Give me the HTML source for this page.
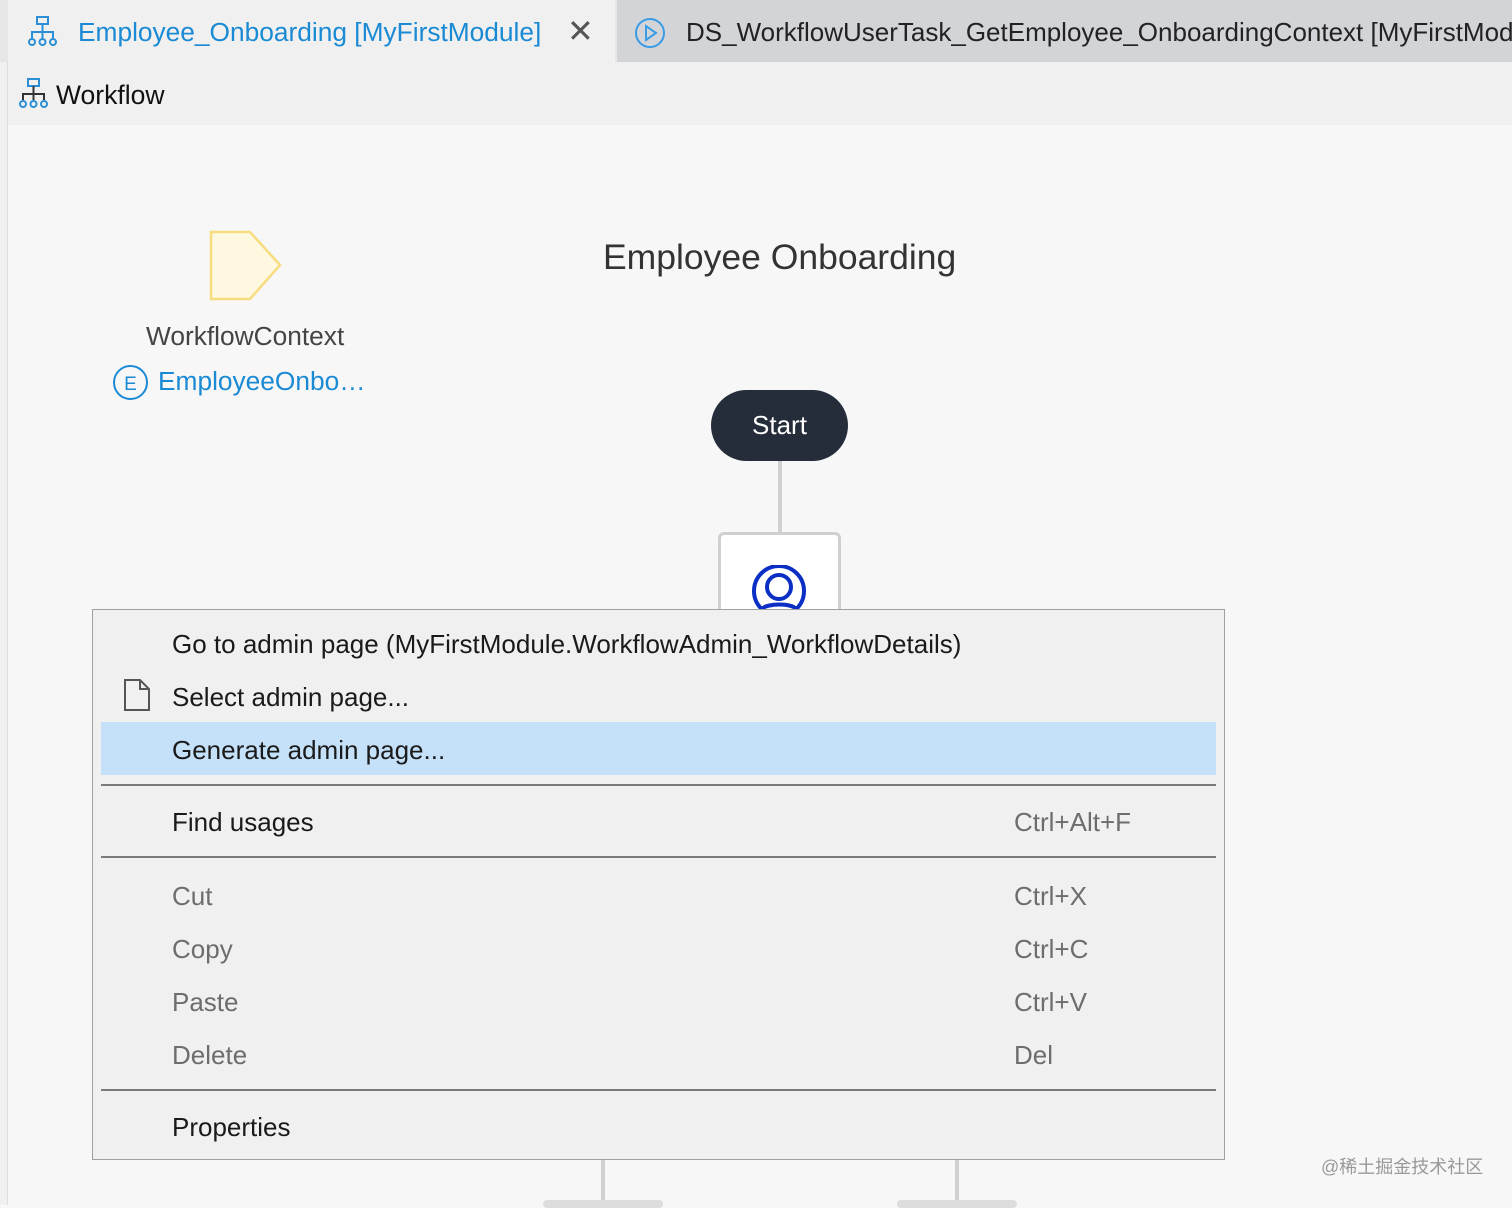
<!DOCTYPE html>
<html><head><meta charset="utf-8"><style>
body{margin:0;width:1512px;height:1205px;overflow:hidden;background:#f7f7f7;font-family:"Liberation Sans","Noto Sans CJK SC",sans-serif;position:relative}
.abs{position:absolute}
.tabbar{left:0;top:0;width:1512px;height:62px;background:#e6e6e6}
.tab1{left:8px;top:0;width:607px;height:62px;background:#f0f0f0}
.tab2{left:617px;top:0;width:895px;height:62px;background:#d3d4d7}
.tool{left:8px;top:62px;width:1504px;height:63px;background:#f0f0f0}
.t{white-space:nowrap}
.menu{left:92px;top:609px;width:1131px;height:549px;background:#f0f0f0;border:1px solid #a0a0a0}
.mi{position:absolute;left:79px;font-size:26px;color:#1a1a1a;white-space:nowrap;line-height:30px}
.sc{position:absolute;left:921px;font-size:26px;color:#6d6d6d;line-height:30px}
.dis{color:#6d6d6d}
.sep{position:absolute;left:8px;width:1115px;height:2px;background:#7a7a7a}
</style></head><body>
<div class="abs tabbar"></div>
<div class="abs tab1"></div>
<div class="abs tab2"></div>
<div class="abs tool"></div>
<div class="abs" style="left:0;top:62px;width:7px;height:1143px;background:#f0f0f0;border-right:1px solid #ddd"></div>

<svg class="abs" style="left:28px;top:16px" width="30" height="32" viewBox="0 0 30 32" fill="none" stroke="#2b8fd6" stroke-width="2"><rect x="9" y="1" width="11" height="7"/><path d="M14.5 8v8M4 22v-6h21v6M14.5 16v6"/><circle cx="4" cy="26" r="3"/><circle cx="14.5" cy="26" r="3"/><circle cx="25" cy="26" r="3"/></svg>
<div class="abs t" style="left:78px;top:17px;font-size:26.3px;color:#1a8ad4">Employee_Onboarding [MyFirstModule]</div>
<div class="abs" style="left:567px;top:12px;font-size:32px;color:#555">✕</div>
<svg class="abs" style="left:634px;top:17px" width="32" height="32" viewBox="0 0 32 32" fill="none" stroke="#3a9be6" stroke-width="2"><circle cx="16" cy="16" r="14"/><path d="M12 9v14l10-7z"/></svg>
<div class="abs t" style="left:686px;top:17px;font-size:26px;color:#222">DS_WorkflowUserTask_GetEmployee_OnboardingContext [MyFirstModule]</div>

<svg class="abs" style="left:19px;top:78px" width="30" height="32" viewBox="0 0 30 32" fill="none" stroke="#2b8fd6" stroke-width="2"><rect x="9" y="1" width="11" height="7"/><path d="M14.5 8v8M4 22v-6h21v6M14.5 16v6" stroke="#333"/><circle cx="4" cy="26" r="3"/><circle cx="14.5" cy="26" r="3"/><circle cx="25" cy="26" r="3"/></svg>
<div class="abs t" style="left:56px;top:80px;font-size:26.5px;color:#111">Workflow</div>

<svg class="abs" style="left:208px;top:229px" width="76" height="74"><path d="M3 3H42L72 36L42 70H3Z" fill="#fff8e0" stroke="#f8dc80" stroke-width="2.5"/></svg>
<div class="abs t" style="left:146px;top:321px;font-size:26.3px;color:#444">WorkflowContext</div>
<svg class="abs" style="left:112px;top:364px" width="37" height="37"><circle cx="18.5" cy="18.5" r="16.5" fill="none" stroke="#1a8ad4" stroke-width="2"/><text x="18.5" y="26" text-anchor="middle" font-size="19" fill="#1a8ad4" font-family="Liberation Sans">E</text></svg>
<div class="abs t" style="left:158px;top:366px;font-size:26.3px;color:#1a8ad4">EmployeeOnbo…</div>

<div class="abs t" style="left:603px;top:237px;font-size:35.5px;color:#333">Employee Onboarding</div>
<div class="abs" style="left:711px;top:390px;width:137px;height:71px;border-radius:36px;background:#252d3a;color:#fff;font-size:26px;text-align:center;line-height:71px">Start</div>
<div class="abs" style="left:778px;top:461px;width:4px;height:72px;background:#d0d0d0"></div>
<div class="abs" style="left:718px;top:532px;width:117px;height:90px;background:#fff;border:3px solid #d0d0d0;border-radius:6px"></div>
<svg class="abs" style="left:750px;top:565px" width="60" height="44"><circle cx="29" cy="26" r="25" fill="none" stroke="#0b2fc4" stroke-width="4"/><circle cx="29" cy="22" r="12" fill="none" stroke="#0b2fc4" stroke-width="4"/><path d="M12 44c5-6 30-6 34 0" fill="none" stroke="#0b2fc4" stroke-width="4"/></svg>

<div class="abs" style="left:601px;top:1158px;width:4px;height:47px;background:#d0d0d0"></div>
<div class="abs" style="left:955px;top:1158px;width:4px;height:47px;background:#d0d0d0"></div>
<div class="abs" style="left:543px;top:1200px;width:120px;height:8px;background:#ddd;border-radius:5px"></div>
<div class="abs" style="left:897px;top:1200px;width:120px;height:8px;background:#ddd;border-radius:5px"></div>
<div class="abs t" style="left:1321px;top:1153px;font-size:18px;color:#999">@稀土掘金技术社区</div>

<div class="abs menu">
<div class="mi" style="top:19px">Go to admin page (MyFirstModule.WorkflowAdmin_WorkflowDetails)</div>
<svg style="position:absolute;left:30px;top:68px" width="28" height="34" fill="none" stroke="#555" stroke-width="2"><path d="M2 2H17L26 11V32H2Z M17 2V11H26"/></svg>
<div class="mi" style="top:72px">Select admin page...</div>
<div style="position:absolute;left:8px;top:112px;width:1115px;height:53px;background:#c5e1fa"></div>
<div class="mi" style="top:125px">Generate admin page...</div>
<div class="sep" style="top:174px"></div>
<div class="mi" style="top:197px">Find usages</div><div class="sc" style="top:197px">Ctrl+Alt+F</div>
<div class="sep" style="top:246px"></div>
<div class="mi dis" style="top:271px">Cut</div><div class="sc" style="top:271px">Ctrl+X</div>
<div class="mi dis" style="top:324px">Copy</div><div class="sc" style="top:324px">Ctrl+C</div>
<div class="mi dis" style="top:377px">Paste</div><div class="sc" style="top:377px">Ctrl+V</div>
<div class="mi dis" style="top:430px">Delete</div><div class="sc" style="top:430px">Del</div>
<div class="sep" style="top:479px"></div>
<div class="mi" style="top:502px">Properties</div>
</div>
</body></html>
